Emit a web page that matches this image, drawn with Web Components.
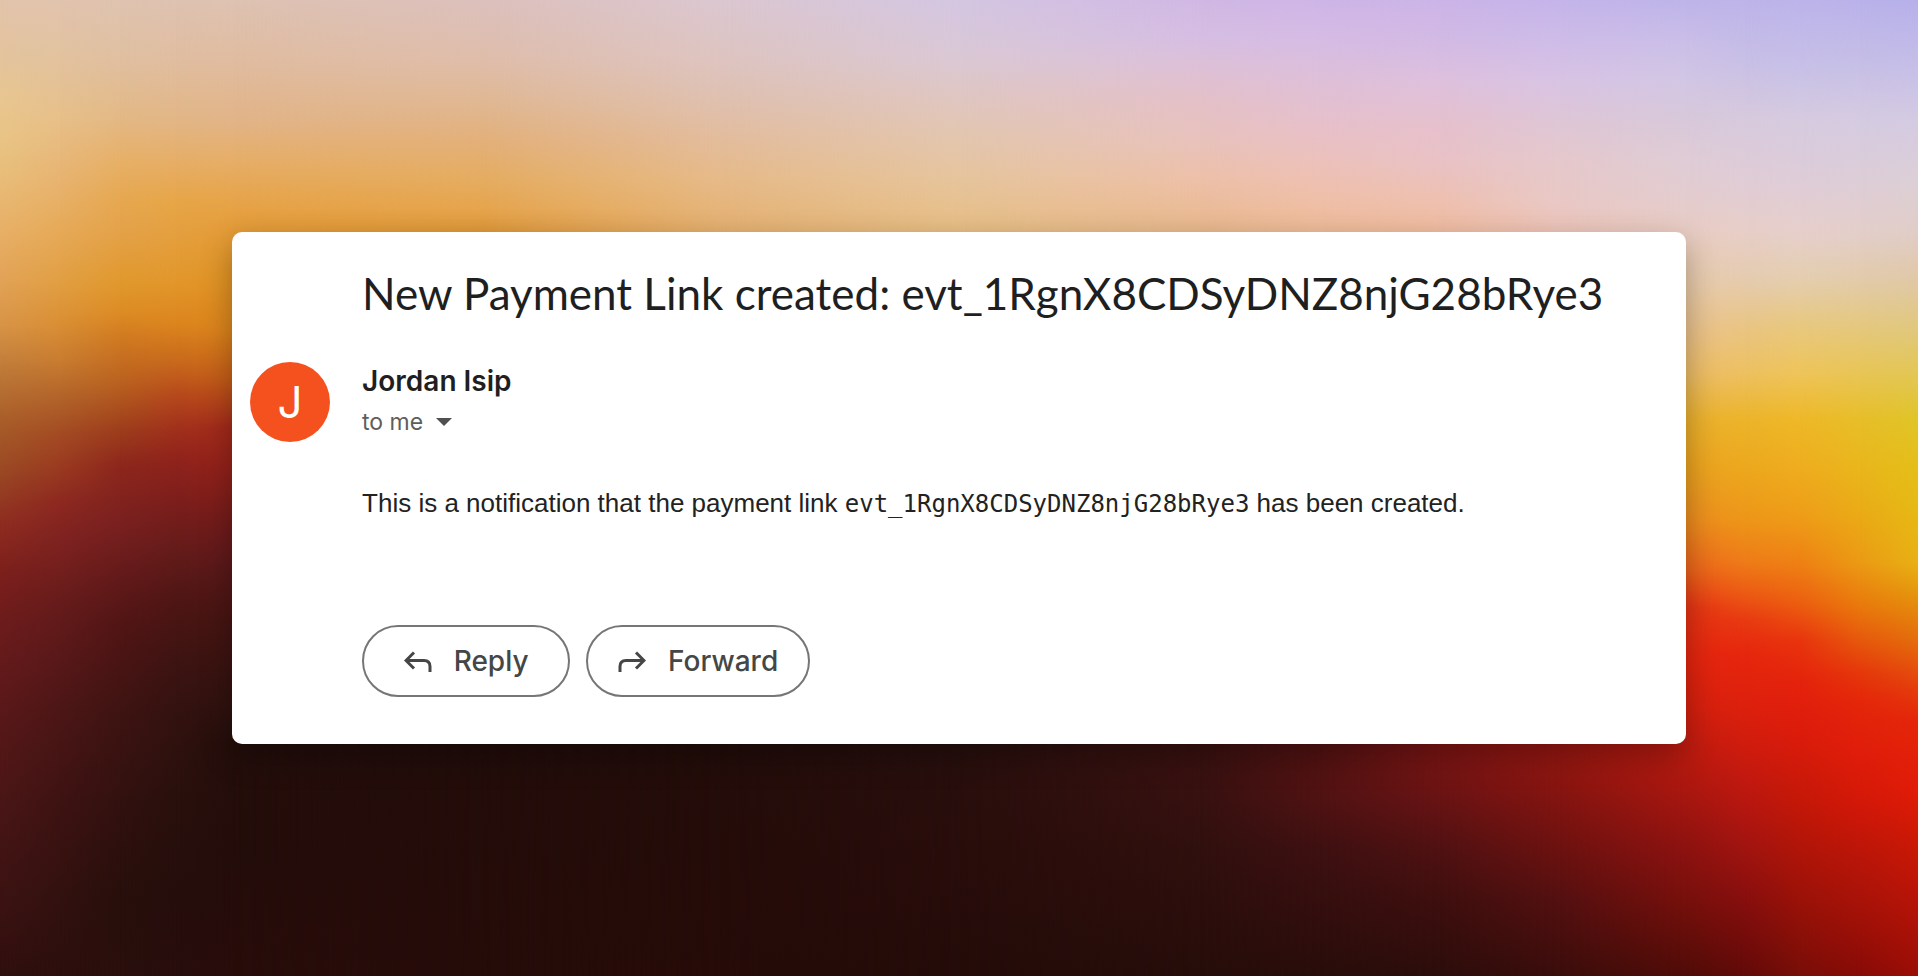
<!DOCTYPE html>
<html lang="en">
<head>
<meta charset="utf-8">
<meta name="viewport" content="width=device-width, initial-scale=1">
<title>New Payment Link created</title>
<style>
  body { margin: 0; font-family: Inter, Roboto, sans-serif; color: #1f1f1f; }
</style>
</head>
<body>
<wallpaper-stage>
  <mail-card>
    <span slot="subject">New Payment Link created: evt_1RgnX8CDSyDNZ8njG28bRye3</span>
    <mail-avatar slot="avatar">J</mail-avatar>
    <mail-sender slot="sender" name="Jordan Isip">to me</mail-sender>
    <mail-body slot="body" event="evt_1RgnX8CDSyDNZ8njG28bRye3">
      <span slot="before">This is a notification that the payment link</span>
      <span slot="after">has been created.</span>
    </mail-body>
    <pill-button slot="actions" icon="reply">Reply</pill-button>
    <pill-button slot="actions" icon="forward">Forward</pill-button>
  </mail-card>
</wallpaper-stage>

<script>
function render(host, html) {
  const root = host.attachShadow({ mode: "open" });
  root.innerHTML = html;
  return root;
}

/* Colour mesh: each column is a vertical gradient at x (0..1918), with stops
   at y (0..976); neighbouring columns fade into each other. */
const MESH_W = 1918, MESH_H = 976;
const MESH = [
  [0, "0 e2c4ac,60 e4c49c,100 e9c690,140 e9c485,180 e8bd78,230 e8b068,278 e2a458,325 d89447,373 bd7838,425 a85c28,473 9a4824,524 8f2c20,571 7d201c,619 6e1c1c,710 5a1819,801 4a1616,897 3c1312,976 300f0f"],
  [60, "0 e1c3ae,60 e2c29e,120 e7bf88,180 e8b370,230 e6aa58,284 e19e42,323 da8f34,361 c87c30,397 b2642a,432 a44c24,467 9a3a20,504 8c2820,542 7e2220,602 661c1b,662 581819,714 4c1616,801 3e1312,897 32110f,976 2c0f0d"],
  [120, "0 dfc3b0,60 e0bfa0,120 e3b884,160 e7b068,200 e6a850,230 e4a24a,284 e0982c,312 dd8c24,337 d07a22,385 b86020,432 9c3c1c,467 8c261c,528 782020,575 641a1a,623 521515,712 3e1412,801 32110f,897 280f0c,976 2a0f0c"],
  [176, "0 dec2b1,60 e0bda0,120 e2b686,160 e6ae68,200 e7a648,230 e4a040,284 e2962a,323 dc851e,361 c86a1c,396 b6481c,430 a0301c,455 92241c,502 7c1e1c,550 641c1a,600 4e1614,658 3e1412,712 33120f,801 29100d,897 240e0b,976 280d0c"],
  [232, "0 dec2b2,60 e0bca0,120 e2b488,160 e6ae68,200 e7a44a,230 e49c38,278 e29424,330 dc841c,380 c45c18,427 a42a1c,475 90201a,523 721c1a,570 5a181a,618 461512,710 2e120f,744 240e0b,850 230d0a,976 280c0a"],
  [480, "0 dcc0bc,60 dfbdaa,100 e0b894,140 e3b07a,180 e5ac60,210 e6a44c,232 e09838,744 220d0a,976 260c09"],
  [720, "0 dbc7d0,60 dec4c0,100 dfc0b0,140 e3bc9c,180 e6ba88,232 e4b070,744 230d0a,976 260b08"],
  [960, "0 d4c6e2,60 dac8d4,100 e0c6c0,140 e3c6ae,180 e6c49c,232 e6be84,744 28100e,850 280d0b,976 240c09"],
  [1200, "0 d0b8e4,40 d6bee2,60 dcc0da,100 e4c0c8,140 e8c2bc,180 edc0a8,232 e8b88c,744 3a1210,800 361110,850 30100e,976 260d0a"],
  [1320, "0 ceb5e7,40 d6bce4,80 debfd8,120 e6c0cc,160 ecc1bc,200 efbfa8,232 eebb98,744 561212,800 501213,850 3e1011,976 280d0b"],
  [1440, "0 ccb4e8,40 d2bae4,80 dec0de,120 e5c0ce,160 e9c2c6,200 eec0b0,232 f0bca0,744 801614,800 681314,850 501112,900 3e0f0e,976 2c0d0b"],
  [1560, "0 c4b4ea,40 cebce8,80 d8c3e4,120 dec6d6,160 e5c8cc,200 e9c8c6,232 ecc4b8,744 9c1812,800 821410,850 6c1210,900 541010,976 3a0d0b"],
  [1686, "0 beb4e8,40 cabee8,80 d2c6e4,120 d8c8da,160 dfccd6,200 e4ccce,230 e8ccc4,278 e8ccae,325 eac290,373 ecbc68,420 eab02e,468 eaa220,520 ec8c20,569 ec641c,607 e63414,655 e4260f,708 d4200e,744 c01c10,801 a4160f,850 8c1210,897 78100c,976 500c08"],
  [1745, "0 bdb4e9,60 c8bfe6,120 d7cadd,180 e0ccd6,230 e7cec8,278 e5cbb0,325 e9c585,373 edc060,420 ecb42a,468 eca81e,520 ed9618,561 ee7c18,592 ec5c14,620 e83a12,655 e6260e,708 dc200d,744 d01c0e,801 b81710,850 a01410,897 880f0e,976 620a08"],
  [1800, "0 bcb4ea,60 c6bfe8,120 d6cbe0,180 deccd8,230 e6cfcc,278 e4ceb0,325 e8c880,373 eec45a,420 eeb828,468 eead1e,518 ee9c18,567 ee7e14,605 ec5c10,641 e8340e,684 e4220c,732 dc1c0c,801 c41808,850 b01508,897 9c1208,976 780e08"],
  [1860, "0 b9b2ea,60 c5bee6,120 d5cbe1,180 ddcdd7,230 e3cecb,278 e2cbac,325 e4c880,373 e8c556,420 e7be28,468 e9b61c,516 eaaa16,563 eb9a14,607 e9780c,645 e6540c,672 e5380b,702 e4260a,750 e01e0a,801 d41808,850 bc1608,897 aa1308,976 880b07"],
  [1918, "0 b6b0ea,60 c4bde8,120 d4cae2,180 dccfd6,230 e0cdc8,278 e0c8a8,325 e0c880,373 e2c655,420 e0c428,468 e4be18,516 e6b814,563 e8b014,600 e4900c,650 e4640c,690 e43c0c,720 e4260a,790 e01c08,850 c81806,897 b81408,976 9a0e06"]
];

customElements.define("wallpaper-stage", class extends HTMLElement {
  connectedCallback() {
    const pct = (v, of) => (v / of * 100).toFixed(2) + "%";
    const strips = MESH.map(([x, stops], i) => {
      const g = stops.split(",").map(s => {
        const [y, c] = s.split(" ");
        return `#${c} ${pct(y, MESH_H)}`;
      }).join(",");
      const mask = i ? `;mask-image:linear-gradient(to right,transparent ${pct(MESH[i - 1][0], MESH_W)},#000 ${pct(x, MESH_W)})` : "";
      return `<i style="background:linear-gradient(${g})${mask}"></i>`;
    }).join("");
    render(this, `
      <style>
        :host { display: grid; min-height: 100vh; }
        .paper, main, i { grid-area: 1 / 1; }
        .paper { display: grid; }
        main { z-index: 1; display: grid; align-content: center; padding: 48px 12.1%; }
      </style>
      <div class="paper" aria-hidden="true">${strips}</div>
      <main><slot></slot></main>`);
  }
});

customElements.define("mail-card", class extends HTMLElement {
  connectedCallback() {
    render(this, `
      <style>
        :host { display: block; background: #fff; border-radius: 10px;
                box-shadow: 0 12px 32px rgba(0, 0, 0, .3); }
        article { display: grid; grid-template-columns: 80px 1fr; column-gap: 32px;
                  padding: 32px 32px 47px 18px; }
        h1, .body, .actions { grid-column: 2; }
        h1 { margin: 0 0 40px; font: 400 44px/58px Lato, sans-serif; }
        .body { margin-top: 39px; }
        .actions { display: flex; flex-wrap: wrap; gap: 16px; margin-top: 102px; }
      </style>
      <article>
        <h1><slot name="subject"></slot></h1>
        <slot name="avatar"></slot>
        <slot name="sender"></slot>
        <div class="body"><slot name="body"></slot></div>
        <div class="actions"><slot name="actions"></slot></div>
      </article>`);
  }
});

customElements.define("mail-avatar", class extends HTMLElement {
  connectedCallback() {
    render(this, `
      <style>
        :host { display: grid; place-items: center; width: 80px; height: 80px;
                border-radius: 50%; background: #f4511e; color: #fff;
                font: 400 44px/80px Inter, sans-serif; }
      </style>
      <slot></slot>`);
  }
});

customElements.define("mail-sender", class extends HTMLElement {
  connectedCallback() {
    render(this, `
      <style>
        :host { display: block; }
        h2 { margin: 0; font-size: 28px; line-height: 38px; font-weight: 600; }
        button { display: flex; align-items: center; gap: 13px; padding: 0; border: 0;
                 background: none; color: #5e5e5e; font: 400 23px/44px Inter, sans-serif; }
        svg { width: 16px; height: 8px; fill: #505050; }
      </style>
      <h2>${this.getAttribute("name")}</h2>
      <button type="button"><slot></slot><svg viewBox="0 0 16 8" aria-hidden="true"><path d="M0 0h16L8 8z"/></svg></button>`);
  }
});

customElements.define("mail-body", class extends HTMLElement {
  connectedCallback() {
    render(this, `
      <style>
        :host { display: block; }
        p { margin: 0; font: 400 26px/40px "Liberation Sans", Arial, sans-serif; color: #222; }
        code { font: 400 24px/32px "DejaVu Sans Mono", Menlo, monospace; }
      </style>
      <p><slot name="before"></slot> <code>${this.getAttribute("event")}</code> <slot name="after"></slot></p>`);
  }
});

const ICONS = {
  reply: "M10 2.500 2 10.500l8 8M2 10.500h18q6 0 6 6V22",
  forward: "M18 2.500l8 8-8 8M26 10.500H8q-6 0-6 6V22"
};

customElements.define("pill-button", class extends HTMLElement {
  connectedCallback() {
    render(this, `
      <style>
        :host { display: block; }
        button { display: flex; align-items: center; justify-content: center; gap: 22px;
                 box-sizing: border-box; min-width: 208px; height: 72px; padding: 0 30px;
                 border: 2px solid #747775; border-radius: 36px; background: #fff;
                 color: #444746; font: 500 28px/40px Inter, sans-serif; }
        svg { width: 28px; height: 22px; fill: none; stroke: #444746; stroke-width: 3; }
      </style>
      <button type="button">
        <svg viewBox="0 0 28 22" aria-hidden="true"><path d="${ICONS[this.getAttribute("icon")]}"/></svg>
        <slot></slot>
      </button>`);
  }
});
</script>
</body>
</html>
